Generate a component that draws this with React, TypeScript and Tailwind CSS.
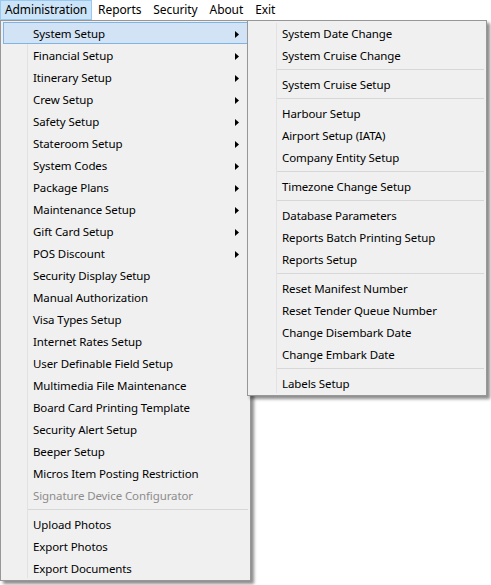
import React from "react";

const main: (string | null)[] = [
  "System Setup","Financial Setup","Itinerary Setup","Crew Setup","Safety Setup","Stateroom Setup","System Codes","Package Plans","Maintenance Setup","Gift Card Setup","POS Discount",
  "Security Display Setup","Manual Authorization","Visa Types Setup","Internet Rates Setup","User Definable Field Setup","Multimedia File Maintenance","Board Card Printing Template","Security Alert Setup","Beeper Setup","Micros Item Posting Restriction","Signature Device Configurator",
  null,"Upload Photos","Export Photos","Export Documents",
];
const sub: (string | null)[] = [
  "System Date Change","System Cruise Change",null,"System Cruise Setup",null,"Harbour Setup","Airport Setup (IATA)","Company Entity Setup",null,"Timezone Change Setup",null,"Database Parameters","Reports Batch Printing Setup","Reports Setup",null,"Reset Manifest Number","Reset Tender Queue Number","Change Disembark Date","Change Embark Date",null,"Labels Setup",
];
const arrows = 11;

function Arrow() {
  return <svg width="4" height="7" viewBox="0 0 4 7" className="absolute right-[8px] top-[8px]"><path d="M0 0L4 3.5L0 7Z" fill="#000" /></svg>;
}

function Menu({ items, gutter, width, arrowsN = 0 }: { items: (string | null)[]; gutter: number; width: number; arrowsN?: number }) {
  return (
    <div className="relative bg-[#f0f0f0] border border-[#979797] pt-[1px] pb-[1px] px-[2px] shadow-[3px_3px_3px_rgba(0,0,0,0.45)]" style={{ width }}>
      <div className="absolute top-[2px] bottom-[2px] w-px bg-[#e2e2e2]" style={{ left: gutter }} />
      {items.map((it, i) =>
        it === null ? (
          <div key={i} className="h-[7px] flex items-center" style={{ paddingLeft: gutter - 1 }}>
            <div className="h-px w-full bg-[#d7d7d7]" />
          </div>
        ) : (
          <div
            key={i}
            className={`relative h-[22px] flex items-center pt-[1px] border ${i === 0 && arrowsN ? "bg-[#d1e3f5] border-[#7fb4e4]" : "border-transparent"} ${it === "Signature Device Configurator" ? "text-[#8d8d8d]" : "text-[#000]"}`}
            style={{ paddingLeft: gutter + 3 }}
          >
            {it}
            {i < arrowsN && <Arrow />}
          </div>
        )
      )}
    </div>
  );
}

export default function App() {
  return (
    <div className="relative w-[491px] h-[585px] bg-white text-[11.5px] font-['Noto_Sans','Open_Sans',sans-serif] leading-none tracking-[-0.1px]">
      <div className="h-[20px] flex items-stretch bg-white text-[12px]">
        <div className="flex items-center px-[4px] bg-[#cce4f7] border border-[#99c9ef] text-black">Administration</div>
        {["Reports", "Security", "About", "Exit"].map((t) => (
          <div key={t} className="flex items-center px-[6px] text-black">{t}</div>
        ))}
      </div>
      <div className="absolute left-0 top-[20px]">
        <Menu items={main} gutter={26} width={251} arrowsN={arrows} />
      </div>
      <div className="absolute left-[247px] top-[20px]">
        <Menu items={sub} gutter={28} width={240} />
      </div>
    </div>
  );
}
